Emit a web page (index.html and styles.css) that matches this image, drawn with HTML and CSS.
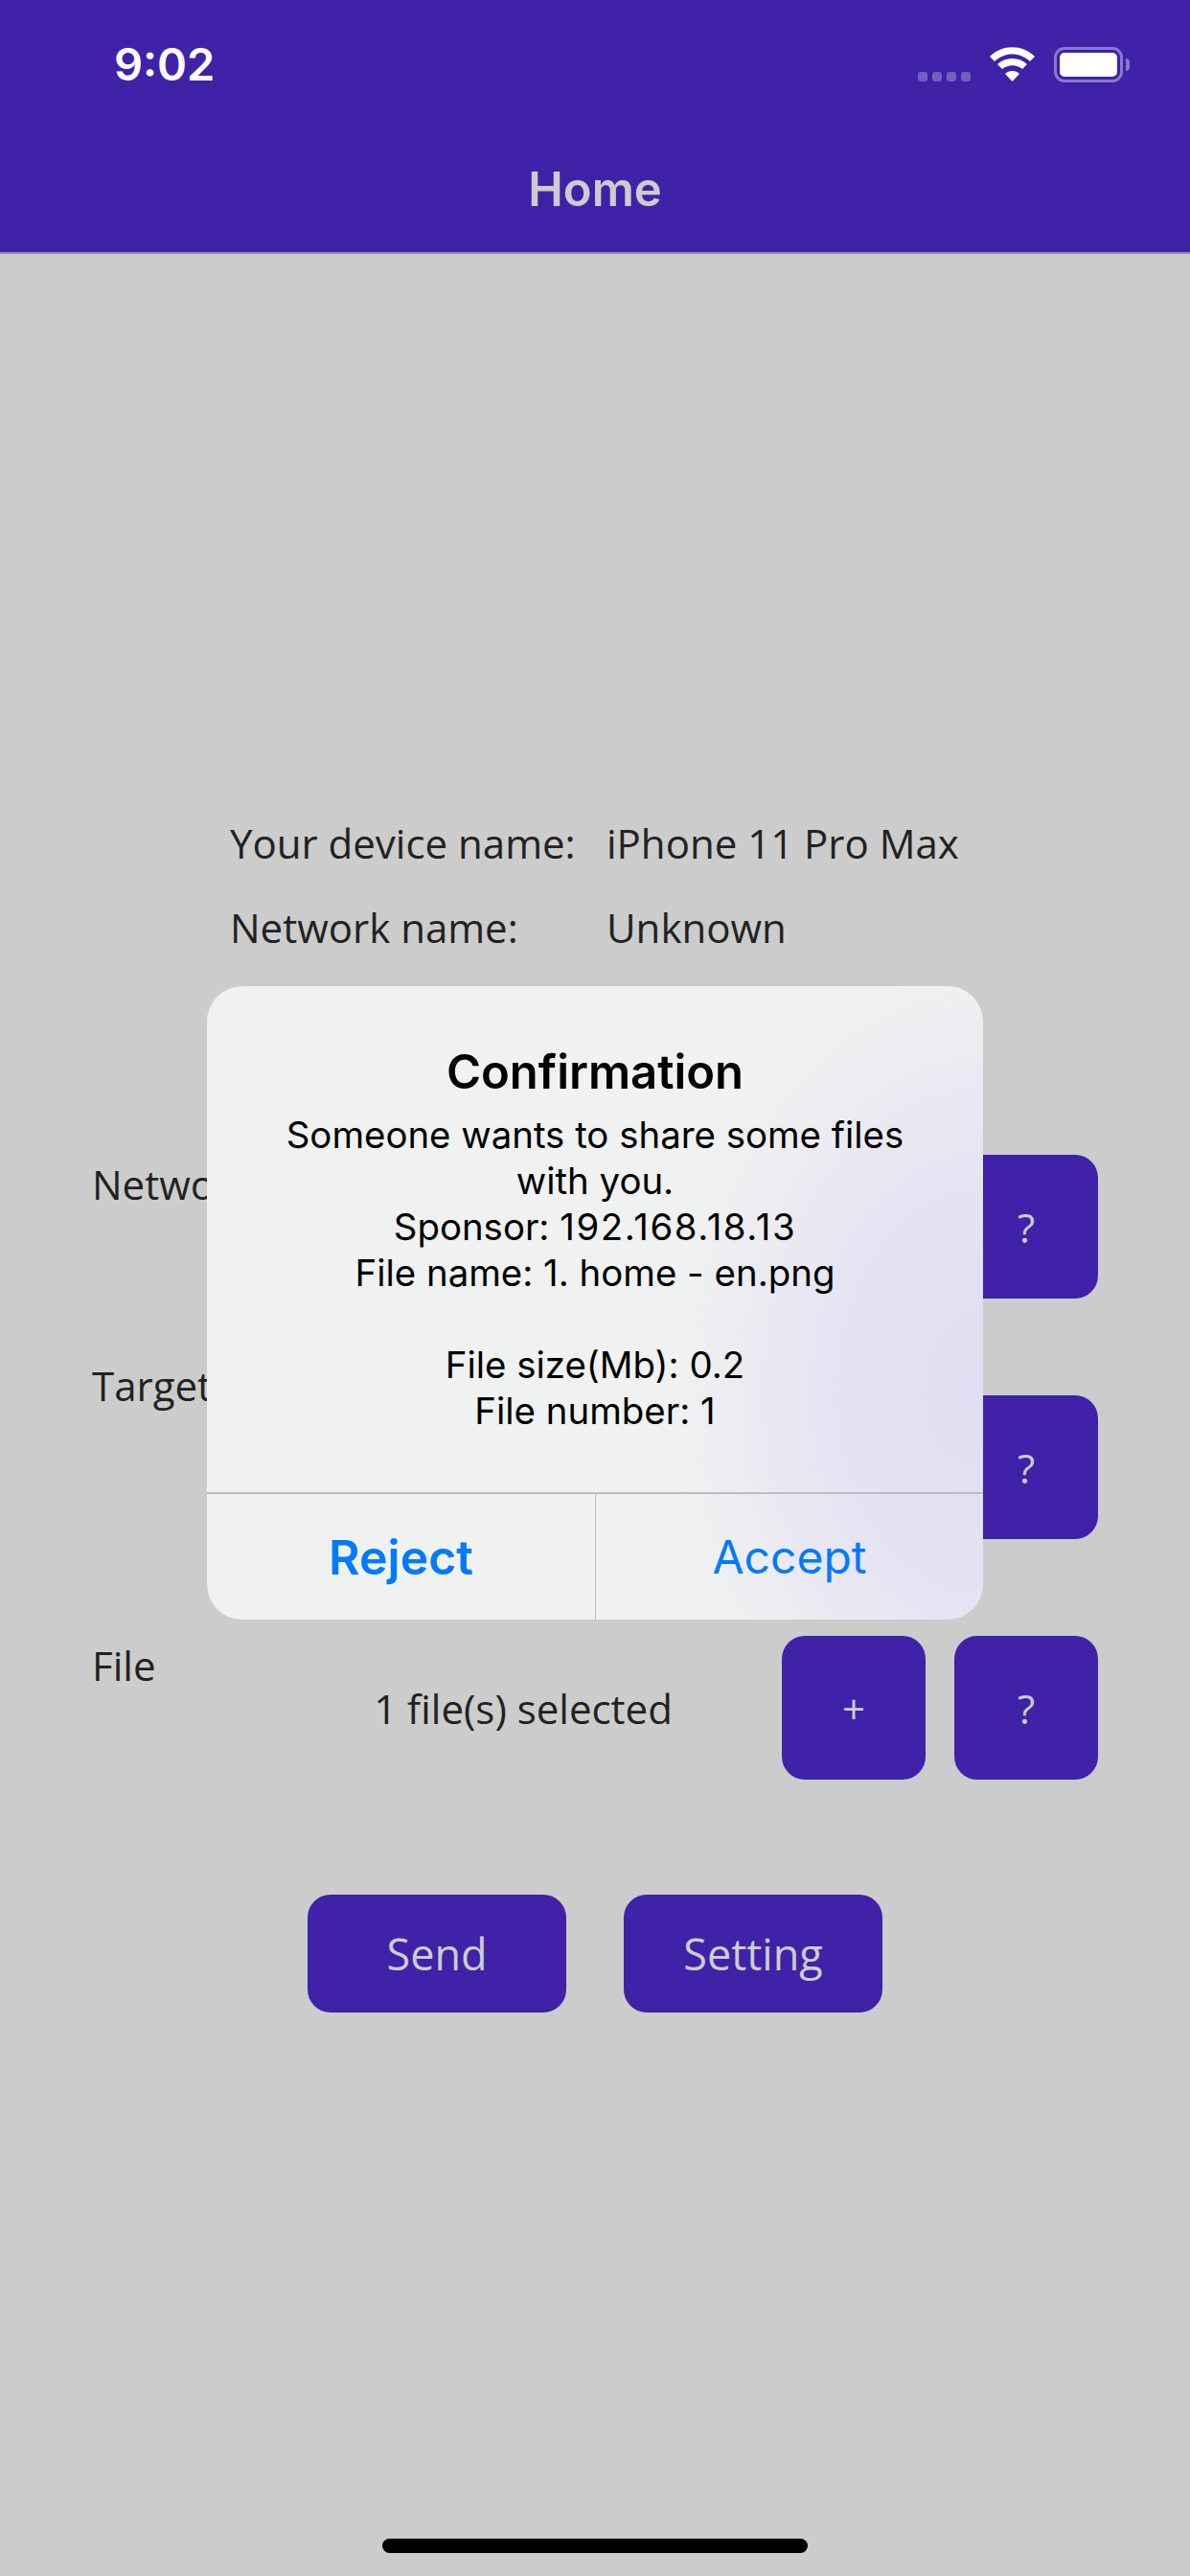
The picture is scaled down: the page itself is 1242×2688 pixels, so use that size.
FILE: index.html
```html
<!DOCTYPE html>
<html lang="en">
<head>
    <meta charset="UTF-8">
    <meta name="viewport" content="width=device-width, initial-scale=1.0">
    <title>Home</title>
    <link rel="stylesheet" href="styles.css">
</head>
<body>

    <!-- Status bar and title -->
    <header class="topbar">
        <div class="status">
            <span class="clock">9:02</span>
            <div class="status-icons">
                <div class="signal"><i></i><i></i><i></i><i></i></div>
                <svg class="wifi" width="47" height="36" viewBox="0 0 47 36">
                    <path d="M0 10C13-3 34-3 47 10L42 15C31 5 16 5 5 15Z"/>
                    <path d="M8 18C16 10 31 10 39 18L34 23C27 18 20 18 13 23Z"/>
                    <path d="M16 28C20 24 27 24 31 28L23.500 36Z"/>
                </svg>
                <div class="battery"><div class="battery-level"></div></div>
            </div>
        </div>
        <h1 class="title">Home</h1>
    </header>

    <main class="content">
        <div class="info">
            <span>Your device name:</span><span>iPhone 11 Pro Max</span>
            <span>Network name:</span><span>Unknown</span>
        </div>

        <div class="rows">
            <div class="row">
                <span class="row-label">Network</span>
                <span class="row-value"></span>
                <span></span>
                <button class="btn square">?</button>
            </div>
            <div class="row">
                <span class="row-label raised">Target</span>
                <span class="row-value"></span>
                <span></span>
                <button class="btn square">?</button>
            </div>
            <div class="row">
                <span class="row-label">File</span>
                <span class="row-value">1 file(s) selected</span>
                <button class="btn square">+</button>
                <button class="btn square">?</button>
            </div>
        </div>

        <div class="actions">
            <button class="btn wide">Send</button>
            <button class="btn wide">Setting</button>
        </div>
    </main>

    <!-- Alert sits over the page -->
    <div class="alert">
        <div class="alert-body">
            <h2 class="alert-title">Confirmation</h2>
            <p class="alert-text">Someone wants to share some files<br>with you.<br>Sponsor: <span class="digits">192.168.18.13</span><br>File name: 1. home - en.png<br><br>File size(Mb): 0.2<br>File number: 1</p>
        </div>
        <div class="alert-buttons">
            <button class="alert-btn strong">Reject</button>
            <button class="alert-btn plain">Accept</button>
        </div>
    </div>

    <div class="home-bar"></div>

</body>
</html>
```

FILE: styles.css
```css
* {
    box-sizing: border-box;
}

body {
    margin: 0;
    width: 1242px;
    height: 2688px;
    position: relative;
    overflow: hidden;
    background-color: #cccccc;
    font-family: "Open Sans", sans-serif;
    color: #222222;
}

/* Top bar */
.topbar {
    height: 265px;
    background-color: #3f22a7;
    border-bottom: 2px solid #8f8aa8;
}

.status {
    height: 166px;
    padding: 42px 70px 0 119px;
    display: flex;
    justify-content: space-between;
    align-items: flex-start;
}

.clock {
    font-family: Inter, sans-serif;
    font-weight: 600;
    font-size: 47px;
    line-height: 50px;
    color: #fff;
}

.status-icons {
    display: flex;
    align-items: flex-end;
    margin-top: 7px;
}

.signal {
    display: flex;
    gap: 5px;
    margin: 0 20px 1px 0;
}

.signal i {
    width: 10px;
    height: 10px;
    border-radius: 3px;
    background-color: #7160c2;
}

.wifi {
    fill: #fff;
    margin: 0 20px 1px 0;
}

.battery {
    width: 72px;
    height: 37px;
    padding: 3px;
    border: 3px solid #8a77d0;
    border-radius: 11px;
    position: relative;
}

.battery::after {
    content: "";
    position: absolute;
    right: -10px;
    top: 9px;
    width: 4px;
    height: 13px;
    border-radius: 0 4px 4px 0;
    background-color: #8a77d0;
}

.battery-level {
    height: 100%;
    border-radius: 5px;
    background-color: #fff;
}

.title {
    margin: 0;
    text-align: center;
    font-family: Inter, sans-serif;
    font-weight: 600;
    font-size: 49px;
    line-height: 64px;
    color: #cccccc;
}

/* Page content */
.content {
    padding-top: 571px;
}

.info {
    display: grid;
    grid-template-columns: 393px auto;
    grid-auto-rows: 88px;
    padding-left: 240px;
    font-size: 42px;
    line-height: 88px;
}

.rows {
    margin-top: 193px;
    display: flex;
    flex-direction: column;
    gap: 101px;
}

.row {
    display: grid;
    grid-template-columns: 180px 1fr 150px 150px;
    gap: 30px;
    padding: 0 96px;
    font-size: 42px;
}

.row-label {
    line-height: 61px;
}

.row-label.raised {
    margin-top: -41px;
}

.row-value {
    align-self: center;
    text-align: center;
}

.btn {
    border: 0;
    padding: 0;
    background-color: #3f22a7;
    color: #cccccc;
    font-family: "Open Sans", sans-serif;
    font-size: 45px;
    border-radius: 24px;
}

.square {
    width: 150px;
    height: 150px;
    font-size: 42px;
}

.actions {
    margin-top: 120px;
    display: flex;
    justify-content: center;
    gap: 60px;
}

.wide {
    width: 270px;
    height: 123px;
}

/* Alert */
.alert {
    position: absolute;
    left: 216px;
    top: 1029px;
    width: 810px;
    height: 661px;
    border-radius: 37px;
    overflow: hidden;
    color: #000;
    font-family: Inter, sans-serif;
    background:
        radial-gradient(ellipse 320px 440px at 100% 64%, #e2def3 0%, #e4e1f3 40%, rgba(240, 241, 241, 0) 100%),
        #f0f1f1;
    display: flex;
    flex-direction: column;
}

.alert-body {
    flex: 1;
    padding-top: 56px;
    text-align: center;
}

.alert-title {
    margin: 0;
    font-weight: 600;
    font-size: 49px;
    line-height: 68px;
}

.alert-text {
    margin: 7px 0 0;
    font-size: 38.400px;
    line-height: 48px;
}

/* Inter's digits run narrow here */
.digits {
    letter-spacing: 1.600px;
}

.alert-buttons {
    height: 133px;
    display: grid;
    grid-template-columns: 1fr 1fr;
    border-top: 2px solid #bcbcc2;
}

.alert-btn {
    border: 0;
    padding: 0;
    background: none;
    color: #007aff;
    font-family: Inter, sans-serif;
    font-size: 48px;
}

.alert-btn.strong {
    font-weight: 600;
    font-size: 50px;
}

.alert-btn.plain {
    border-left: 1px solid #bcbcc2;
}

/* Home indicator */
.home-bar {
    position: absolute;
    left: 399px;
    top: 2649px;
    width: 444px;
    height: 15px;
    border-radius: 8px;
    background-color: #000;
}
```
